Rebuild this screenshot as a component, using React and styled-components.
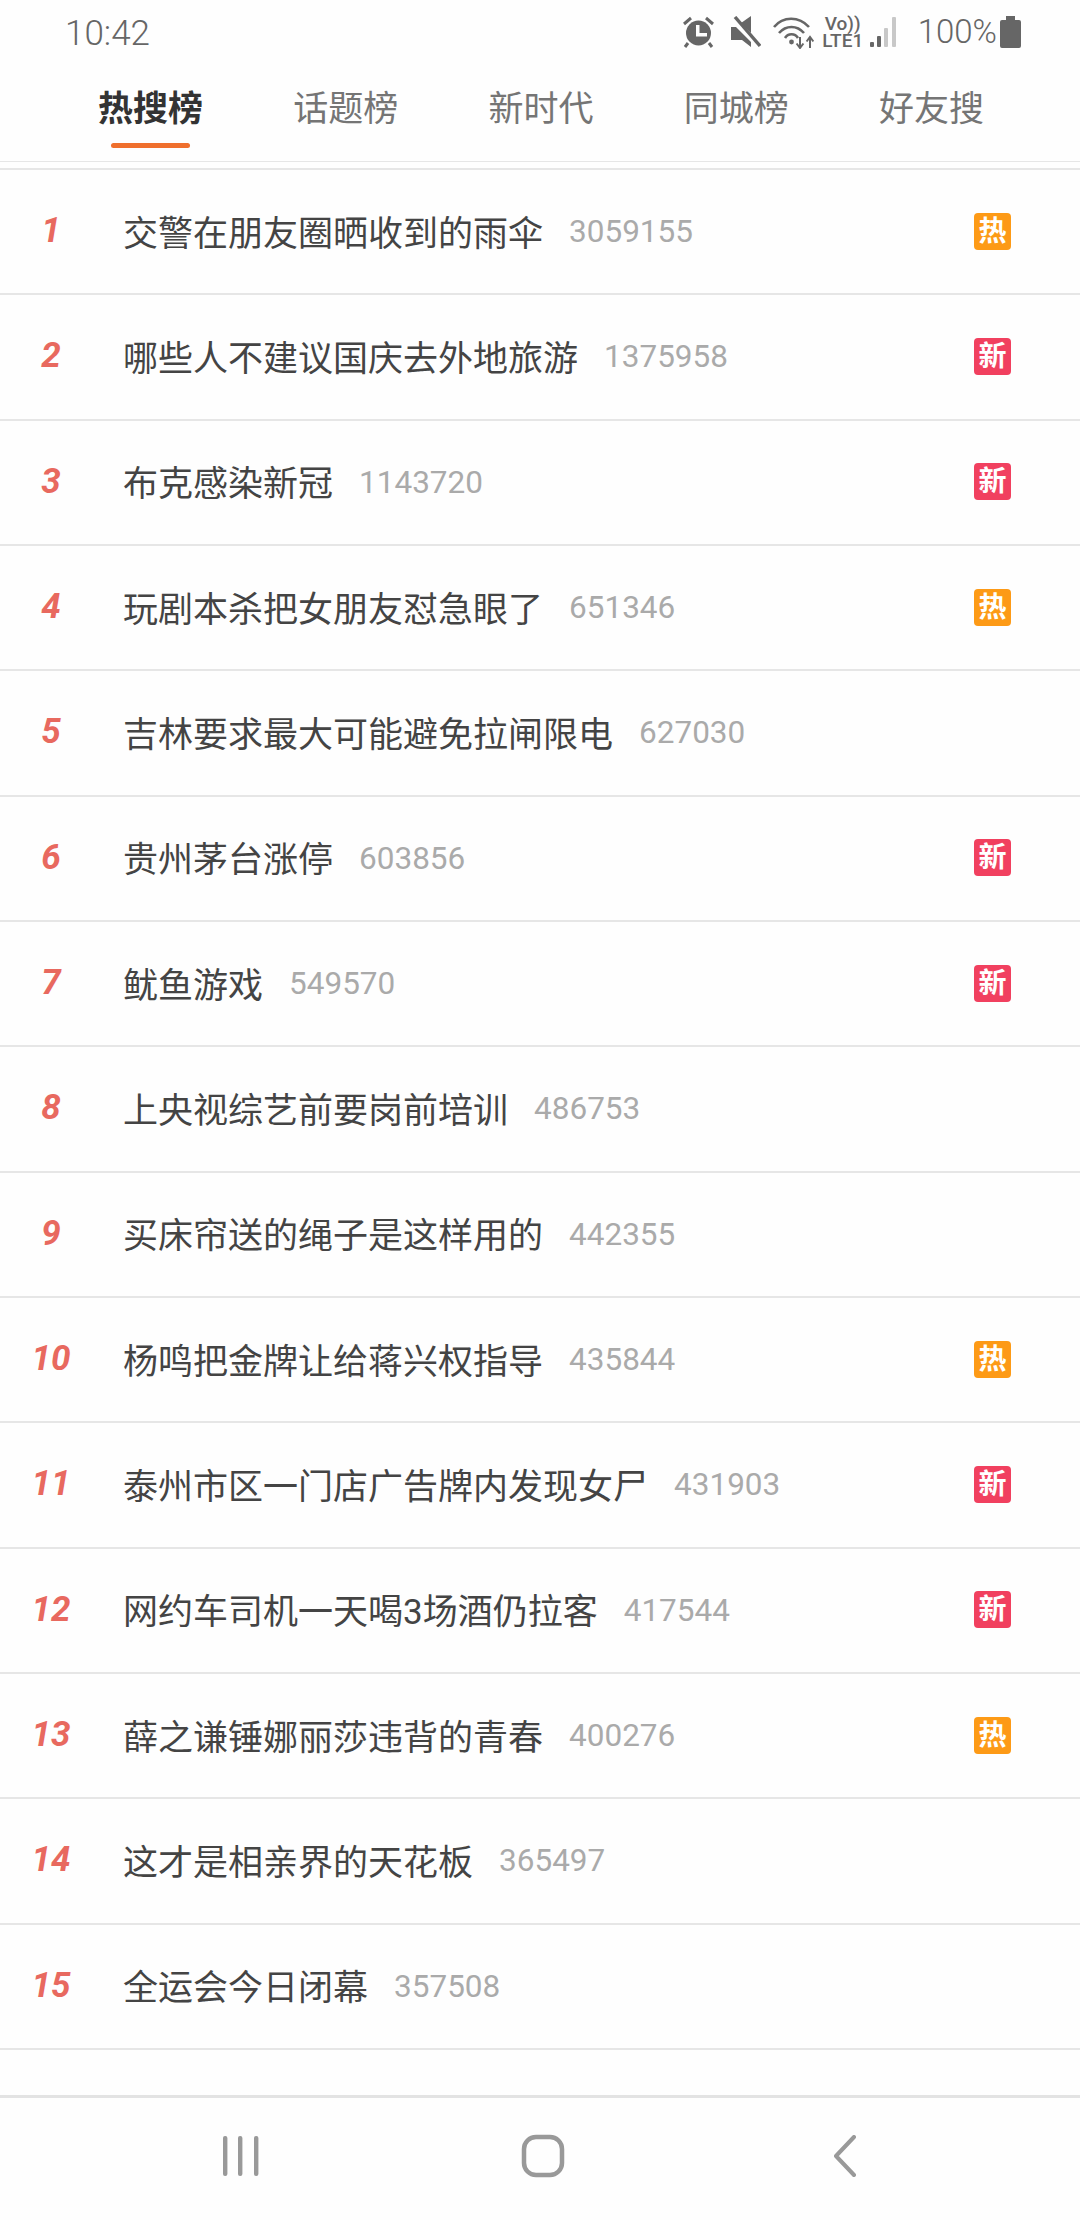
import React from "react";
import styled, { createGlobalStyle } from "styled-components";

const Global = createGlobalStyle`
  html, body { margin: 0; padding: 0; background: #fefefe; }
  #root { width: 1080px; height: 2220px; }
`;

const CJK = `Roboto, "Noto Sans CJK SC", sans-serif`;

const Page = styled.div`
  width: 1080px;
  height: 2220px;
  background: #fefefe;
  display: flex;
  flex-direction: column;
  overflow: hidden;
  font-family: ${CJK};
`;

const StatusBar = styled.div`
  height: 64px;
  display: flex;
  align-items: center;
  justify-content: space-between;
  padding: 3px 59px 0 65px;
  box-sizing: border-box;
  color: #666;
`;

const Clock = styled.div`
  font-size: 35px;
  font-weight: 300;
`;

const StatusIcons = styled.div`
  display: flex;
  align-items: center;
  height: 34px;
  margin-top: -3px;
`;

const IconSlot = styled.svg`
  display: block;
  margin-left: ${(p) => p.$ml || 0}px;
  flex: none;
`;

const VoLte = styled.div`
  margin-left: 9px;
  width: 40px;
  display: flex;
  flex-direction: column;
  align-items: center;
  font-size: 19px;
  font-weight: 500;
  line-height: 17px;
  white-space: nowrap;
  color: #666;
`;

const BatteryText = styled.div`
  margin-left: 21px;
  font-size: 33px;
  font-weight: 300;
  line-height: 34px;
  color: #666;
`;

const Tabs = styled.div`
  height: 97px;
  display: grid;
  grid-template-columns: repeat(5, 1fr);
  padding: 0 51px 0 53px;
  border-bottom: 1px solid #e6e6e6;
  box-sizing: content-box;
`;

const Tab = styled.div`
  position: relative;
  display: flex;
  justify-content: center;
  padding-top: 21px;
  box-sizing: border-box;
  font-size: 35px;
  line-height: 50px;
  font-weight: ${(p) => (p.$active ? 700 : 400)};
  color: ${(p) => (p.$active ? "#333" : "#757575")};
`;

const TabMark = styled.span`
  position: absolute;
  left: 50%;
  top: 79px;
  width: 79px;
  height: 5px;
  margin-left: -40px;
  border-radius: 3px;
  background: #ef6f2d;
`;

const List = styled.div`
  margin-top: 6px;
  border-top: 2px solid #e6e6e6;
`;

const Row = styled.div`
  height: 125.33px;
  box-sizing: border-box;
  border-bottom: 2px solid #e6e6e6;
  display: flex;
  align-items: center;
  padding-right: 69px;
`;

const Rank = styled.div`
  width: 102px;
  flex: none;
  padding-bottom: 2px;
  text-align: center;
  font-size: 35px;
  font-weight: 700;
  font-style: italic;
  color: #e8695f;
`;

const Title = styled.div`
  margin-left: 21px;
  padding-bottom: 3px;
  font-size: 35px;
  color: #444;
  white-space: nowrap;
`;

const Count = styled.div`
  margin-left: 26px;
  font-size: 31.5px;
  color: #aaa;
`;

const Badge = styled.div`
  margin-left: auto;
  margin-bottom: 1px;
  width: 37px;
  height: 37px;
  border-radius: 4px;
  display: flex;
  align-items: center;
  justify-content: center;
  font-size: 28px;
  font-weight: 700;
  line-height: 37px;
  color: #fff;
  background: ${(p) => (p.$type === "新" ? "#f1405f" : "#fd9a16")};
`;

const Nav = styled.div`
  margin-top: auto;
  height: 125px;
  border-top: 3px solid #e3e3e3;
  box-sizing: border-box;
  display: grid;
  grid-template-columns: 1fr 1fr 1fr;
  padding: 0 84px 6px 90px;
  align-items: center;
  justify-items: center;
`;

const rows = [
  ["交警在朋友圈晒收到的雨伞", "3059155", "热"],
  ["哪些人不建议国庆去外地旅游", "1375958", "新"],
  ["布克感染新冠", "1143720", "新"],
  ["玩剧本杀把女朋友怼急眼了", "651346", "热"],
  ["吉林要求最大可能避免拉闸限电", "627030"],
  ["贵州茅台涨停", "603856", "新"],
  ["鱿鱼游戏", "549570", "新"],
  ["上央视综艺前要岗前培训", "486753"],
  ["买床帘送的绳子是这样用的", "442355"],
  ["杨鸣把金牌让给蒋兴权指导", "435844", "热"],
  ["泰州市区一门店广告牌内发现女尸", "431903", "新"],
  ["网约车司机一天喝3场酒仍拉客", "417544", "新"],
  ["薛之谦锤娜丽莎违背的青春", "400276", "热"],
  ["这才是相亲界的天花板", "365497"],
  ["全运会今日闭幕", "357508"],
];

const tabs = ["热搜榜", "话题榜", "新时代", "同城榜", "好友搜"];

const Alarm = () => (
  <IconSlot width="33" height="32" viewBox="0 0 33 32" fill="#666">
    <circle cx="16.5" cy="17" r="12.5" />
    <path d="M2 8 9 2 M31 8 24 2 M6 27 3 31 M27 27 30 31" stroke="#666" strokeWidth="3" fill="none" />
    <path d="M14 9h3.5v8H25v3.5H14z" fill="#fefefe" />
  </IconSlot>
);

const Mute = () => (
  <IconSlot $ml={16} width="30" height="32" viewBox="0 0 30 32" fill="#666">
    <path d="M0 11h5L20 26v5L11 24H0z" />
    <path d="M10 7 20 0V17z" />
    <path d="M4 1 29 30" stroke="#666" strokeWidth="3.4" />
  </IconSlot>
);

const Wifi = () => (
  <IconSlot $ml={12} width="41" height="33" viewBox="0 0 41 33" fill="none" stroke="#666" strokeWidth="2.6">
    <path d="M1 11C10 0 26 0 36 11" />
    <path d="M6 17C13 9 24 9 31 17" />
    <path d="M12 22C15 17 22 17 25 22" />
    <circle cx="18.5" cy="26" r="2.4" fill="#666" stroke="none" />
    <path d="M27 21v10M23.6 27.5 27 32 30.4 27.5M37 32V22M33.6 25.5 37 21 40.4 25.5" strokeWidth="2" />
  </IconSlot>
);

const Signal = () => (
  <IconSlot $ml={7} width="27" height="32" viewBox="0 0 27 32">
    <rect x="0" y="26" width="4" height="5" rx="1" fill="#666" />
    <rect x="7" y="20" width="4" height="11" rx="1" fill="#666" />
    <rect x="14" y="12" width="4" height="19" rx="1" fill="#c8c8c8" />
    <rect x="22" y="1" width="4" height="30" rx="1" fill="#c8c8c8" />
  </IconSlot>
);

const BatteryIcon = () => (
  <IconSlot $ml={3} width="21" height="32" viewBox="0 0 21 32" fill="#666">
    <path d="M6 0h9v4h4a2 2 0 0 1 2 2v24a2 2 0 0 1-2 2H2a2 2 0 0 1-2-2V6a2 2 0 0 1 2-2h4z" />
  </IconSlot>
);

const NavRecents = () => (
  <svg width="38" height="42" viewBox="0 0 38 42" fill="#999">
    <rect x="1" y="1" width="4.4" height="40" rx="2" />
    <rect x="16" y="1" width="4.4" height="40" rx="2" />
    <rect x="32" y="1" width="4.4" height="40" rx="2" />
  </svg>
);

const NavHome = () => (
  <svg width="44" height="44" viewBox="0 0 44 44" fill="none" stroke="#999" strokeWidth="4.5">
    <rect x="3" y="3" width="38" height="38" rx="12" />
  </svg>
);

const NavBack = () => (
  <svg width="24" height="42" viewBox="0 0 24 42" fill="none" stroke="#999" strokeWidth="4" strokeLinecap="round" strokeLinejoin="round">
    <path d="M21 2 3 21 21 40" />
  </svg>
);

export default function App() {
  return (
    <Page>
      <Global />
      <StatusBar>
        <Clock>10:42</Clock>
        <StatusIcons>
          <Alarm />
          <Mute />
          <Wifi />
          <VoLte>
            <span>Vo))</span>
            <span>LTE1</span>
          </VoLte>
          <Signal />
          <BatteryText>100%</BatteryText>
          <BatteryIcon />
        </StatusIcons>
      </StatusBar>
      <Tabs>
        {tabs.map((t, i) => (
          <Tab key={t} $active={i === 0}>
            {t}
            {i === 0 && <TabMark />}
          </Tab>
        ))}
      </Tabs>
      <List>
        {rows.map(([title, count, badge], i) => (
          <Row key={title}>
            <Rank>{i + 1}</Rank>
            <Title>{title}</Title>
            <Count>{count}</Count>
            {badge && <Badge $type={badge}>{badge}</Badge>}
          </Row>
        ))}
      </List>
      <Nav>
        <NavRecents />
        <NavHome />
        <NavBack />
      </Nav>
    </Page>
  );
}
